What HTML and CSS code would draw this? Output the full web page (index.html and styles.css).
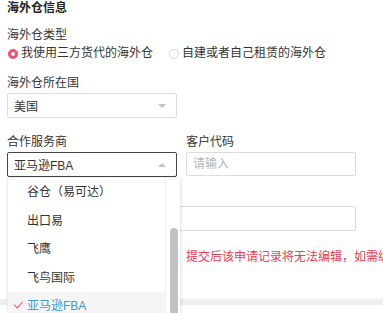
FILE: index.html
```html
<!DOCTYPE html>
<html lang="zh-CN">
<head>
    <meta charset="UTF-8">
    <meta name="viewport" content="width=device-width, initial-scale=1.0">
    <title>海外仓信息</title>
    <link rel="stylesheet" href="styles.css">
</head>
<body>
    <div class="form">
        <div class="section-title">海外仓信息</div>

        <div class="field field-type">
            <div class="label">海外仓类型</div>
            <div class="radios">
                <label class="radio checked"><span class="dot"></span>我使用三方货代的海外仓</label>
                <label class="radio"><span class="dot"></span>自建或者自己租赁的海外仓</label>
            </div>
        </div>

        <div class="field field-country">
            <div class="label">海外仓所在国</div>
            <div class="select">
                <span>美国</span>
                <span class="caret down"></span>
            </div>
        </div>

        <div class="row">
            <div class="field col">
                <div class="label">合作服务商</div>
                <div class="select open">
                    <span>亚马逊FBA</span>
                    <span class="caret up"></span>
                </div>
                <div class="dropdown">
                    <ul class="options">
                        <li>谷仓（易可达）</li>
                        <li>出口易</li>
                        <li>飞鹰</li>
                        <li>飞鸟国际</li>
                        <li class="selected"><span class="check"></span>亚马逊FBA</li>
                    </ul>
                    <div class="scrollbar"><div class="thumb"></div></div>
                </div>
            </div>
            <div class="field col">
                <div class="label">客户代码</div>
                <div class="input placeholder">请输入</div>
            </div>
        </div>

        <div class="field field-extra">
            <div class="input wide"></div>
        </div>

        <div class="notice">提交后该申请记录将无法编辑，如需编辑请联系客服</div>
    </div>
    <div class="footer-line"></div>
</body>
</html>
```

FILE: styles.css
```css
body {
    margin: 0;
    font-family: "Liberation Sans", "Noto Sans CJK SC", sans-serif;
    font-size: 12px;
    color: #333;
    background: #fff;
    overflow: hidden;
    height: 313px;
}

.form {
    padding: 1px 7px 0;
    width: 349px;
}

.section-title {
    font-weight: bold;
    line-height: 14px;
    color: #222;
}

.label {
    line-height: 16px;
    height: 16px;
}

.field-type {
    margin-top: 12px;
}

.radios {
    display: flex;
    gap: 15px;
    margin-top: 2px;
    line-height: 17px;
}

.radio {
    display: flex;
    align-items: center;
    white-space: nowrap;
}

.dot {
    width: 10px;
    height: 10px;
    border-radius: 50%;
    border: 1px solid #d6d6d6;
    box-sizing: border-box;
    margin-right: 3px;
    margin-left: 1px;
}

.radio.checked .dot {
    border: 3px solid #f2506a;
}

.field-country {
    margin-top: 13px;
}

.select {
    margin-top: 2px;
    height: 25px;
    width: 170px;
    box-sizing: border-box;
    border: 1px solid #dcdcdc;
    border-radius: 2px;
    display: flex;
    align-items: center;
    justify-content: space-between;
    padding: 0 10px 0 6px;
}

.select.open {
    border-color: #444;
}

.caret {
    width: 0;
    height: 0;
    border-left: 4px solid transparent;
    border-right: 4px solid transparent;
}

.caret.down {
    border-top: 4px solid #c4c4c4;
}

.caret.up {
    border-bottom: 4px solid #c4c4c4;
}

.row {
    display: flex;
    gap: 9px;
    margin-top: 16px;
}

.col {
    position: relative;
    width: 170px;
}

.input {
    margin-top: 2px;
    height: 24px;
    box-sizing: border-box;
    border: 1px solid #dcdcdc;
    border-radius: 2px;
    padding: 0 6px;
    line-height: 22px;
}

.placeholder {
    color: #b4b4b4;
}

.field-extra {
    margin-top: 29px;
}

.input.wide {
    width: 349px;
    height: 25px;
}

.notice {
    margin-top: 18px;
    margin-left: 179px;
    color: #f23a50;
    line-height: 17px;
    white-space: nowrap;
}

.footer-line {
    margin-top: 33px;
    height: 6px;
    background: #eeeeee;
}

.dropdown {
    position: absolute;
    top: 44px;
    left: 0;
    width: 172px;
    height: 150px;
    background: #fff;
    border-left: 1px solid #ececec;
    box-shadow: 1px 0 3px rgba(0, 0, 0, 0.12);
    display: flex;
    z-index: 2;
}

.options {
    list-style: none;
    margin: 0;
    padding: 0;
    flex: 1;
}

.options li {
    height: 28.5px;
    line-height: 28.5px;
    padding-left: 19px;
    position: relative;
    white-space: nowrap;
}

.options li.selected {
    background: #f5f5f5;
    color: #3b9ad2;
}

.check {
    position: absolute;
    left: 6px;
    top: 9px;
    width: 8px;
    height: 4px;
    border-left: 1.5px solid #f2506a;
    border-bottom: 1.5px solid #f2506a;
    transform: rotate(-45deg);
}

.scrollbar {
    width: 15px;
    border-left: 1px solid #f0f0f0;
    box-sizing: border-box;
}

.thumb {
    margin: 50px 0 0 4px;
    width: 8px;
    height: 120px;
    border-radius: 4px 4px 0 0;
    background: #c2c2c2;
}
```
